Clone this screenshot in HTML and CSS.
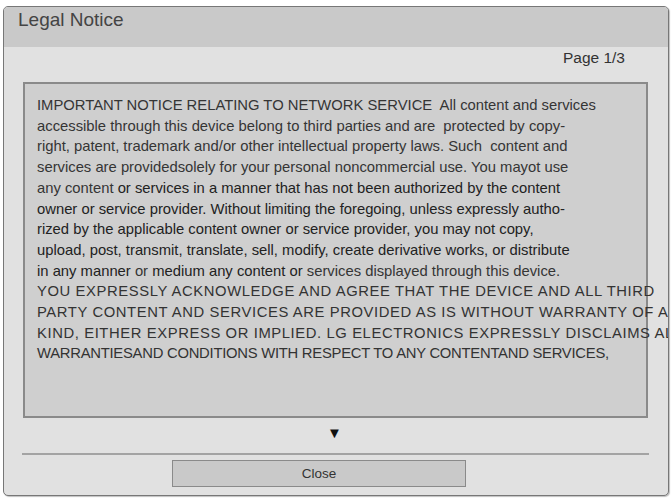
FILE: index.html
```html
<!DOCTYPE html>
<html>
<head>
    <title>Legal Notice</title>
    <link rel="stylesheet" href="styles.css">
</head>
<body>
    <div class="dialog">
        <div class="title-bar">Legal Notice</div>
        <div class="dialog-body">
            <div class="page-info">Page 1/3</div>
            <div class="notice-box">
                <div class="line">IMPORTANT NOTICE RELATING TO NETWORK SERVICE  All content and services</div>
                <div class="line">accessible through this device belong to third parties and are  protected by copy-</div>
                <div class="line">right, patent, trademark and/or other intellectual property laws. Such  content and</div>
                <div class="line">services are providedsolely for your personal noncommercial use. You mayot use</div>
                <div class="line">any content <span class="dark">or services in a manner that has not been authorized by the content</span></div>
                <div class="line dark">owner or service provider. Without limiting the foregoing, unless expressly autho-</div>
                <div class="line dark">rized by the applicable content owner or service provider, you may not copy,</div>
                <div class="line dark">upload, post, transmit, translate, sell, modify, create derivative works, or distribute</div>
                <div class="line"><span class="dark">in any manner</span> or <span class="dark">medium any content or</span> services displayed through this device.</div>
                <div class="line caps">YOU EXPRESSLY ACKNOWLEDGE AND AGREE THAT THE DEVICE AND ALL THIRD</div>
                <div class="line caps">PARTY CONTENT AND SERVICES ARE PROVIDED AS IS WITHOUT WARRANTY OF ANY</div>
                <div class="line caps">KIND, EITHER EXPRESS OR IMPLIED. LG ELECTRONICS EXPRESSLY DISCLAIMS ALL</div>
                <div class="line tight">WARRANTIESAND CONDITIONS WITH RESPECT TO ANY CONTENTAND SERVICES,</div>
            </div>
            <div class="more-arrow">&#9660;</div>
            <div class="divider"></div>
            <div class="button-row">
                <button class="close-btn">Close</button>
            </div>
        </div>
    </div>
</body>
</html>
```

FILE: styles.css
```css
body {
    margin: 0;
    padding: 6px 2px 2px 3px;
    background: #ffffff;
    font-family: "Liberation Sans", Arial, sans-serif;
}

.dialog {
    height: 490px;
    box-sizing: border-box;
    border: 1px solid #777;
    border-radius: 5px;
    background: #e1e1e1;
    overflow: hidden;
    display: flex;
    flex-direction: column;
    box-shadow: 1px 1px 1px rgba(0,0,0,0.25);
}

.title-bar {
    height: 40px;
    background: #c9c9c9;
    color: #444;
    font-size: 19px;
    padding: 2px 0 0 14px;
    box-sizing: border-box;
}

.dialog-body {
    flex: 1;
    display: flex;
    flex-direction: column;
    padding: 0 20px 0 19px;
}

.page-info {
    text-align: right;
    font-size: 15.5px;
    color: #333;
    padding: 2px 23px 0 0;
    height: 35px;
    box-sizing: border-box;
}

.notice-box {
    height: 336px;
    flex-shrink: 0;
    box-sizing: border-box;
    background: #cfcfcf;
    border: 2px solid #8a8a8a;
    padding: 11px 0 0 12px;
}

.line {
    white-space: pre;
    font-size: 14.8px;
    line-height: 20.7px;
    color: #353535;
}

.dark {
    color: #222;
}

.caps {
    color: #333;
    letter-spacing: 0.6px;
}

.tight {
    color: #333;
    letter-spacing: -0.25px;
}

.more-arrow {
    text-align: center;
    font-size: 15px;
    color: #111;
    height: 30px;
    line-height: 30px;
    padding-right: 2px;
}

.divider {
    height: 2px;
    background: #a3a3a3;
    margin: 5px -1px 0 -1px;
}

.button-row {
    padding: 5px 0 0 149px;
}

.close-btn {
    width: 294px;
    height: 27px;
    background: #c9c9c9;
    border: 1px solid #8a8a8a;
    font-family: "Liberation Sans", Arial, sans-serif;
    font-size: 13.5px;
    color: #333;
    padding: 0;
}
```
